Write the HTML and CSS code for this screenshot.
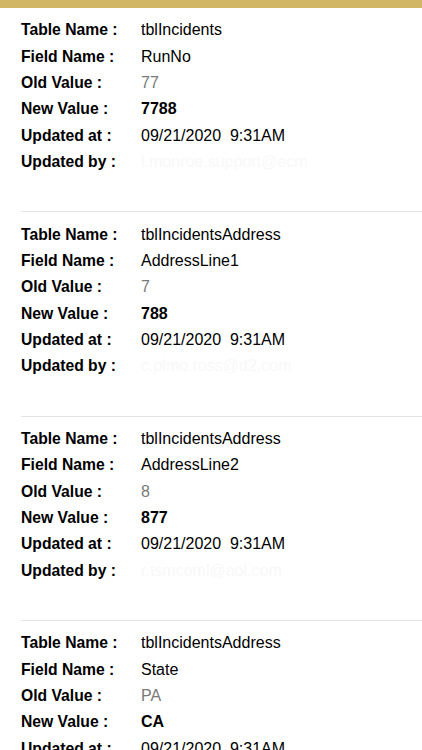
FILE: index.html
```html
<!DOCTYPE html>
<html lang="en">
<head>
    <meta charset="UTF-8">
    <meta name="viewport" content="width=device-width, initial-scale=1.0">
    <title>Audit Log</title>
    <link rel="stylesheet" href="styles.css">
</head>
<body>
<header class="top-bar"></header>

<div class="log-list">
    <div class="log-item">
        <div class="row"><span class="label">Table Name :</span><span class="value">tblIncidents</span></div>
        <div class="row"><span class="label">Field Name :</span><span class="value">RunNo</span></div>
        <div class="row"><span class="label">Old Value :</span><span class="value old">77</span></div>
        <div class="row"><span class="label">New Value :</span><span class="value new">7788</span></div>
        <div class="row"><span class="label">Updated at :</span><span class="value">09/21/2020&nbsp; 9:31AM</span></div>
        <div class="row"><span class="label">Updated by :</span><span class="value hidden-user">l.monroe.support@ecm</span></div>
    </div>
    <div class="log-item">
        <div class="row"><span class="label">Table Name :</span><span class="value">tblIncidentsAddress</span></div>
        <div class="row"><span class="label">Field Name :</span><span class="value">AddressLine1</span></div>
        <div class="row"><span class="label">Old Value :</span><span class="value old">7</span></div>
        <div class="row"><span class="label">New Value :</span><span class="value new">788</span></div>
        <div class="row"><span class="label">Updated at :</span><span class="value">09/21/2020&nbsp; 9:31AM</span></div>
        <div class="row"><span class="label">Updated by :</span><span class="value hidden-user">c.plmo.ross@d2.com</span></div>
    </div>
    <div class="log-item">
        <div class="row"><span class="label">Table Name :</span><span class="value">tblIncidentsAddress</span></div>
        <div class="row"><span class="label">Field Name :</span><span class="value">AddressLine2</span></div>
        <div class="row"><span class="label">Old Value :</span><span class="value old">8</span></div>
        <div class="row"><span class="label">New Value :</span><span class="value new">877</span></div>
        <div class="row"><span class="label">Updated at :</span><span class="value">09/21/2020&nbsp; 9:31AM</span></div>
        <div class="row"><span class="label">Updated by :</span><span class="value hidden-user">r.tsmcoml@aol.com</span></div>
    </div>
    <div class="log-item">
        <div class="row"><span class="label">Table Name :</span><span class="value">tblIncidentsAddress</span></div>
        <div class="row"><span class="label">Field Name :</span><span class="value">State</span></div>
        <div class="row"><span class="label">Old Value :</span><span class="value old">PA</span></div>
        <div class="row"><span class="label">New Value :</span><span class="value new">CA</span></div>
        <div class="row"><span class="label">Updated at :</span><span class="value">09/21/2020&nbsp; 9:31AM</span></div>
        <div class="row"><span class="label">Updated by :</span><span class="value hidden-user">r.tsmcoml@aol.com</span></div>
    </div>
</div>
</body>
</html>
```

FILE: styles.css
```css
/* Audit log list */
body {
    margin: 0;
    font-family: "Liberation Sans", Arial, sans-serif;
    background-color: #fff;
    color: #000;
    overflow: hidden;
}
.top-bar {
    height: 8px;
    background-color: #d1b665;
}
.log-item {
    margin-left: 21px;
    padding-top: 9px;
    padding-bottom: 36px;
    border-bottom: 1px solid #e2e2e2;
}
.row {
    display: flex;
    align-items: center;
    height: 26.4px;
}
.label {
    width: 120px;
    font-size: 15.7px;
    font-weight: bold;
    color: #000;
}
.value {
    font-size: 16px;
    color: #000;
}
.value.old {
    color: #7a7a7a;
}
.value.new {
    font-weight: bold;
}
.value.hidden-user {
    color: #f8f8f8;
}
```
